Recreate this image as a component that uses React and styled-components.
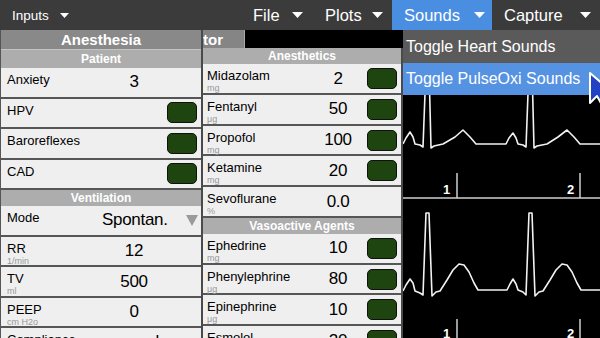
import React from "react";
import styled, { createGlobalStyle } from "styled-components";

const GlobalStyle = createGlobalStyle`
  html, body {
    margin: 0;
    padding: 0;
    background: #000;
    overflow: hidden;
  }
  body {
    font-family: "Liberation Sans", Arial, Helvetica, sans-serif;
  }
`;

const Screen = styled.div`
  position: relative;
  width: 600px;
  height: 338px;
  display: flex;
  flex-direction: column;
  overflow: hidden;
  background: #000;
`;

const TopBar = styled.div`
  height: 30px;
  flex: none;
  display: flex;
  align-items: stretch;
  background: #3b3b3b;
  color: #fff;
`;

const Spacer = styled.div`
  flex: 1;
`;

const MenuItem = styled.div`
  position: relative;
  box-sizing: border-box;
  width: ${(p) => (p.$width ? `${p.$width}px` : "auto")};
  display: flex;
  align-items: center;
  gap: ${(p) => (p.$small ? "11px" : "0")};
  padding: 0 ${(p) => p.$padRight ?? 9}px 0 12px;
  background: ${(p) => (p.$open ? "#4a8ee2" : "transparent")};
  font-size: ${(p) => (p.$small ? "13.5px" : "16.5px")};
`;

const Caret = styled.svg`
  margin-left: ${(p) => (p.$small ? "0" : "auto")};
  flex: none;
`;

const Dropdown = styled.div`
  position: absolute;
  top: 30px;
  left: 11px;
  width: 197px;
  z-index: 10;
  display: flex;
  flex-direction: column;
`;

const DropItem = styled.div`
  height: ${(p) => p.$h}px;
  display: flex;
  align-items: center;
  padding-left: 3px;
  white-space: nowrap;
  font-size: 16px;
  color: #fff;
  background: ${(p) => (p.$active ? "#5592e2" : "#5a5a5a")};
`;

const Content = styled.div`
  flex: 1;
  display: flex;
  min-height: 0;
`;

const Panel = styled.div`
  box-sizing: border-box;
  width: ${(p) => p.$width}px;
  flex: none;
  display: flex;
  flex-direction: column;
  background: #efefef;
  border-left: ${(p) => (p.$edge ? "1px solid #555" : "none")};
  border-right: 2px solid #4a4a4a;
`;

const PanelTitle = styled.div`
  height: 19px;
  flex: none;
  display: flex;
  align-items: center;
  justify-content: center;
  background: #898989;
  border-bottom: 1px solid #c4c4c4;
  color: #fff;
  font-weight: bold;
  font-size: 15px;
`;

const SectionHead = styled.div`
  height: ${(p) => p.$h}px;
  flex: none;
  display: flex;
  align-items: center;
  justify-content: center;
  background: #adadad;
  color: #fff;
  font-weight: bold;
  font-size: 12px;
`;

const Row = styled.div`
  height: ${(p) => p.$h}px;
  flex: none;
  display: grid;
  grid-template-columns: ${(p) => p.$label}px 1fr 31px;
  align-items: center;
  padding: 0 4px 0 ${(p) => p.$padL}px;
  border-bottom: 2px solid #565656;
  background: #efefef;
`;

const Label = styled.div`
  align-self: start;
  padding-top: 4px;
  white-space: nowrap;
`;

const Name = styled.div`
  font-size: 13px;
  line-height: 15px;
  color: #000;
`;

const Unit = styled.div`
  font-size: 9px;
  line-height: 10px;
  color: #999;
`;

const Value = styled.div`
  text-align: center;
  font-size: 17px;
  letter-spacing: -0.3px;
  color: #000;
  white-space: nowrap;
`;

const Toggle = styled.div`
  justify-self: center;
  box-sizing: border-box;
  width: 30px;
  height: 21px;
  border: 1.5px solid #111;
  border-radius: 5px;
  background: #1e4410;
`;

const SelectArrow = styled.svg`
  justify-self: end;
  margin-right: 1px;
`;

const MiddleColumn = styled.div`
  width: 200px;
  flex: none;
  display: flex;
  flex-direction: column;
`;

const TabStrip = styled.div`
  height: 18px;
  flex: none;
  display: flex;
  overflow: hidden;
  background: #000;
`;

const Tab = styled.div`
  margin-left: -36px;
  padding: 0 21px 0 1px;
  display: flex;
  align-items: center;
  background: #858585;
  border-right: 1px solid #a8a8a8;
  color: #fff;
  font-weight: bold;
  font-size: 15px;
  white-space: nowrap;
`;

const Monitor = styled.div`
  flex: 1;
  background: #000;
  overflow: hidden;
`;

const Pointer = styled.svg`
  position: absolute;
  left: 588px;
  top: 71px;
  z-index: 20;
`;

const leftSections = [
  {
    title: "Patient",
    h: 18,
    rows: [
      { name: "Anxiety", value: "3" },
      { name: "HPV", toggle: true },
      { name: "Baroreflexes", toggle: true },
      { name: "CAD", toggle: true },
    ],
  },
  {
    title: "Ventilation",
    h: 16,
    rows: [
      { name: "Mode", value: "Spontan.", select: true },
      { name: "RR", unit: "1/min", value: "12" },
      { name: "TV", unit: "ml", value: "500" },
      { name: "PEEP", unit: "cm H2o", value: "0" },
      { name: "Compliance", value: "normal" },
    ],
  },
];

const middleSections = [
  {
    title: "Anesthetics",
    h: 16,
    rows: [
      { name: "Midazolam", unit: "mg", value: "2", toggle: true },
      { name: "Fentanyl", unit: "μg", value: "50", toggle: true },
      { name: "Propofol", unit: "mg", value: "100", toggle: true },
      { name: "Ketamine", unit: "mg", value: "20", toggle: true },
      { name: "Sevoflurane", unit: "%", value: "0.0" },
    ],
  },
  {
    title: "Vasoactive Agents",
    h: 16,
    rows: [
      { name: "Ephedrine", unit: "mg", value: "10", toggle: true },
      { name: "Phenylephrine", unit: "μg", value: "80", toggle: true },
      { name: "Epinephrine", unit: "μg", value: "10", toggle: true },
      { name: "Esmolol", unit: "mg", value: "20", toggle: true },
    ],
  },
];

const trace1 = [
  [403, 144], [406, 138], [410, 132], [413, 137], [415, 144], [420, 145], [423, 147],
  [426, 67], [429, 67], [431, 148], [434, 146], [443, 144], [455, 137], [463, 130],
  [470, 137], [476, 144], [506, 144], [509, 138], [513, 133], [516, 138], [518, 144],
  [523, 145], [526, 147], [529, 67], [532, 67], [534, 148], [537, 146], [547, 144],
  [558, 137], [567, 130], [574, 137], [580, 144], [600, 144],
];

const trace2 = [
  [403, 291], [406, 285], [410, 279], [413, 283], [415, 291], [420, 293], [423, 295],
  [426, 213], [429, 213], [432, 296], [436, 292], [440, 291], [447, 280], [453, 270],
  [459, 264], [464, 265], [469, 272], [474, 283], [478, 290], [507, 290], [510, 284],
  [513, 279], [516, 284], [518, 290], [523, 292], [526, 295], [529, 213], [532, 213],
  [535, 296], [539, 292], [543, 291], [550, 280], [556, 270], [562, 264], [567, 265],
  [572, 272], [577, 283], [581, 290], [600, 290],
];

const toPoints = (pts) => pts.map(([x, y]) => `${x},${y}`).join(" ");

function MenuCaret({ small }) {
  const w = small ? 9 : 11;
  const h = small ? 5 : 6;
  return (
    <Caret $small={small} width={w} height={h} viewBox={`0 0 ${w} ${h}`}>
      <path d={`M0 0H${w}L${w / 2} ${h}Z`} fill="#fff" />
    </Caret>
  );
}

function SectionRows({ section, rowH, label, padL }) {
  return (
    <>
      <SectionHead $h={section.h}>{section.title}</SectionHead>
      {section.rows.map((r) => (
        <Row key={r.name} $h={rowH} $label={label} $padL={padL}>
          <Label>
            <Name>{r.name}</Name>
            {r.unit && <Unit>{r.unit}</Unit>}
          </Label>
          <Value>{r.value}</Value>
          {r.toggle && <Toggle />}
          {r.select && (
            <SelectArrow width="12" height="11" viewBox="0 0 12 11">
              <path d="M0 0H12L6 11Z" fill="#9a9a9a" />
            </SelectArrow>
          )}
        </Row>
      ))}
    </>
  );
}

function EcgView() {
  return (
    <svg width="197" height="308" viewBox="403 30 197 308" style={{ display: "block" }}>
      <polyline points={toPoints(trace1)} fill="none" stroke="#f2f2f2" strokeWidth="1.6" strokeLinejoin="round" />
      <polyline points={toPoints(trace2)} fill="none" stroke="#f2f2f2" strokeWidth="1.6" strokeLinejoin="round" />
      <line x1="403" y1="198" x2="600" y2="198" stroke="#cfcfcf" strokeWidth="1.5" />
      <line x1="457" y1="173" x2="457" y2="198" stroke="#cfcfcf" strokeWidth="1.5" />
      <line x1="580" y1="173" x2="580" y2="198" stroke="#cfcfcf" strokeWidth="1.5" />
      <line x1="457" y1="319" x2="457" y2="338" stroke="#cfcfcf" strokeWidth="1.5" />
      <line x1="580" y1="319" x2="580" y2="338" stroke="#cfcfcf" strokeWidth="1.5" />
      <g fill="#fff" fontFamily="Liberation Sans, Arial, sans-serif" fontWeight="bold" fontSize="13">
        <text x="443" y="194">1</text>
        <text x="567" y="194">2</text>
        <text x="443" y="338">1</text>
        <text x="567" y="338">2</text>
      </g>
    </svg>
  );
}

export default function App() {
  return (
    <Screen>
      <GlobalStyle />
      <TopBar>
        <MenuItem $small>
          Inputs
          <MenuCaret small />
        </MenuItem>
        <Spacer />
        <MenuItem $width={72} $padRight={10}>
          File
          <MenuCaret />
        </MenuItem>
        <MenuItem $width={79}>
          Plots
          <MenuCaret />
        </MenuItem>
        <MenuItem $width={100} $padRight={7} $open>
          Sounds
          <MenuCaret />
          <Dropdown>
            <DropItem $h={33}>Toggle Heart Sounds</DropItem>
            <DropItem $h={32} $active>
              Toggle PulseOxi Sounds
            </DropItem>
          </Dropdown>
        </MenuItem>
        <MenuItem $width={108}>
          Capture
          <MenuCaret />
        </MenuItem>
      </TopBar>

      <Content>
        <Panel $width={203} $edge>
          <PanelTitle>Anesthesia</PanelTitle>
          {leftSections.map((s) => (
            <SectionRows key={s.title} section={s} rowH={28.5} label={95} padL={6} />
          ))}
        </Panel>

        <MiddleColumn>
          <TabStrip>
            <Tab>Monitor</Tab>
          </TabStrip>
          <Panel $width={200}>
            {middleSections.map((s) => (
              <SectionRows key={s.title} section={s} rowH={28.75} label={103} padL={4} />
            ))}
          </Panel>
        </MiddleColumn>

        <Monitor>
          <EcgView />
        </Monitor>
      </Content>

      <Pointer width="14" height="36" viewBox="0 0 14 36">
        <path d="M2 2V32L9 25L14 34L20 31L15 22H25Z" fill="#2342c4" stroke="#fff" strokeWidth="2" strokeLinejoin="round" />
      </Pointer>
    </Screen>
  );
}
